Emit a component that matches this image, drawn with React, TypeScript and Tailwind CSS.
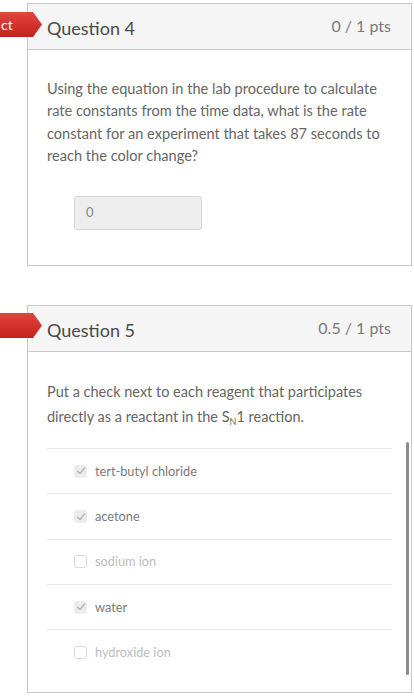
import React from 'react';

type Choice = { label: string; checked: boolean };

const choices: Choice[] = [
  { label: 'tert-butyl chloride', checked: true },
  { label: 'acetone', checked: true },
  { label: 'sodium ion', checked: false },
  { label: 'water', checked: true },
  { label: 'hydroxide ion', checked: false },
];

function Banner({ text, top }: { text?: string; top: string }) {
  return (
    <div className={`absolute left-[-28px] ${top} w-[42px] h-[25px]`}>
      <svg width="42" height="25" viewBox="0 0 42 25" className="absolute inset-0">
        <defs>
          <linearGradient id="bannerRed" x1="0" y1="0" x2="0" y2="1">
            <stop offset="0" stopColor="#e2463e" />
            <stop offset="1" stopColor="#c1221c" />
          </linearGradient>
        </defs>
        <polygon points="0,0 33,0 42,12.5 33,25 0,25" fill="url(#bannerRed)" />
      </svg>
      {text && (
        <span className="absolute left-[1px] top-0 h-[25px] flex items-center text-[14px] text-white">{text}</span>
      )}
    </div>
  );
}

function Header({ title, pts, banner, bannerTop }: { title: string; pts: string; banner?: string; bannerTop: string }) {
  return (
    <div className="h-[46px] bg-[#f5f5f5] border-b border-[#c8c8c8] flex items-center justify-between px-[19px]">
      <Banner text={banner} top={bannerTop} />
      <span className="text-[18px] text-[#4a4a4a] pt-[3px]">{title}</span>
      <span className="text-[16px] text-[#7a7a7a] mb-[2px] mr-[1px]">{pts}</span>
    </div>
  );
}

function CheckBox({ checked }: { checked: boolean }) {
  if (checked) {
    return (
      <span className="w-[13px] h-[13px] rounded-[3px] bg-[#ececec] flex items-center justify-center">
        <svg width="10" height="10" viewBox="0 0 10 10">
          <path d="M1.5 5.2 L4 7.6 L8.6 2" fill="none" stroke="#b3b3b3" strokeWidth="1.4" strokeLinecap="round" strokeLinejoin="round" />
        </svg>
      </span>
    );
  }
  return <span className="w-[13px] h-[13px] rounded-[3px] border border-[#d9d9d9] bg-white" />;
}

export default function App() {
  return (
    <div className="min-h-[700px] bg-white pt-[3px] pl-[27px] pr-[2px] font-['Lato','Open_Sans',sans-serif]">
      <div className="relative border border-[#c8c8c8] bg-white">
        <Header title="Question 4" pts="0 / 1 pts" banner="ct" bannerTop="top-[8px]" />
        <div className="px-[19px] pt-[28px] pb-[35px]">
          <p className="text-[14.6px] leading-[22.3px] text-[#666]">
            Using the equation in the lab procedure to calculate rate constants from the time data, what is the rate constant for an experiment that takes 87 seconds to reach the color change?
          </p>
          <div className="mt-[29px] ml-[27px] w-[128px] h-[34px] rounded-[3px] border border-[#d6d6d6] bg-[#eeeeee] flex items-center px-[11px] text-[13px] text-[#888]">
            0
          </div>
        </div>
      </div>

      <div className="relative mt-[39px] border border-[#c8c8c8] bg-white">
        <Header title="Question 5" pts="0.5 / 1 pts" bannerTop="top-[7px]" />
        <div className="px-[19px] pt-[26.5px] pb-[17px]">
          <p className="text-[14.5px] leading-[25px] text-[#666]">
            Put a check next to each reagent that participates directly as a reactant in the S<span className="relative top-[3px] text-[9px]">N</span>1 reaction.
          </p>
          <div className="mt-[17.5px]">
            {choices.map((c) => (
              <div key={c.label} className="h-[45.3px] border-t border-[#e6e6e6] flex items-center pl-[27px] gap-[8px]">
                <CheckBox checked={c.checked} />
                <span className={`text-[12.75px] ${c.checked ? 'text-[#7a7a7a]' : 'text-[#bcbcbc]'}`}>{c.label}</span>
              </div>
            ))}
          </div>
        </div>
        <div className="absolute right-[2px] top-[136px] w-[3px] h-[233px] rounded-full bg-[#8a8a8a]" />
      </div>
    </div>
  );
}
